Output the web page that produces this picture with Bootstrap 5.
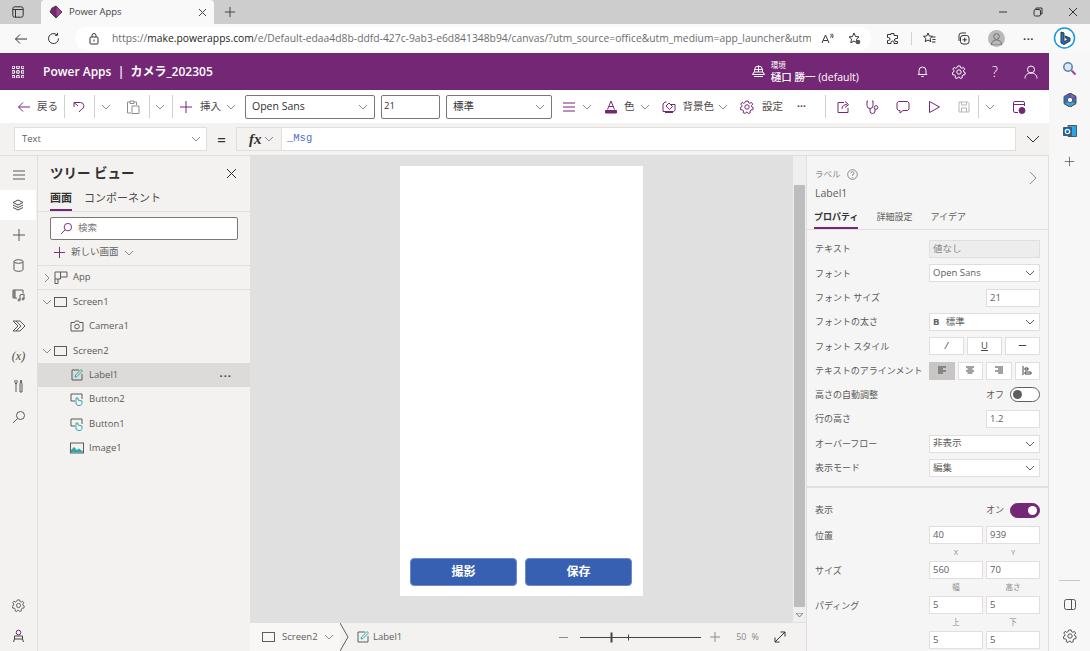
<!DOCTYPE html>
<html lang="ja">
<head>
<meta charset="UTF-8">
<title>Power Apps</title>
<link href="https://cdn.jsdelivr.net/npm/bootstrap@5.3.2/dist/css/bootstrap.min.css" rel="stylesheet">
<style>
    html, body { margin: 0; height: 651px; overflow: hidden; }
    body { width: 1090px; font-family: "Open Sans", "Noto Sans CJK JP", sans-serif; font-size: 9.5px; color: #4d4b49; background: #f7f7f7; }
    svg { display: block; flex: none; fill: none; stroke: currentColor; stroke-width: 1; }
    .ml2 { margin-left: 2px; } .ml3 { margin-left: 3px; } .ml4 { margin-left: 4px; } .ml5 { margin-left: 5px; } .ml6 { margin-left: 6px; }
    .ml7 { margin-left: 7px; } .ml8 { margin-left: 8px; } .ml9 { margin-left: 9px; } .ml10 { margin-left: 10px; } .ml12 { margin-left: 12px; }
    .ml14 { margin-left: 14px; } .ml15 { margin-left: 15px; } .ml16 { margin-left: 16px; } .ml17 { margin-left: 17px; } .ml18 { margin-left: 18px; }

    /* browser */
    .tabstrip { height: 24px; background: #cdcdcd; color: #333; }
    .brtab { width: 173px; height: 24px; margin-left: 17px; padding: 0 7px 0 8px; background: #f9f9f9; border-radius: 4px 4px 0 0; font-size: 9.5px; color: #444; }
    .addr { height: 29px; background: #f9f9f9; color: #333; }
    .pill { width: 796px; height: 23px; background: #fff; border-radius: 12px; padding: 0 9px 0 13px; }
    .url { width: 699px; font-size: 10.3px; color: #6b6b6b; white-space: nowrap; overflow: hidden; letter-spacing: .02px; }
    .url b { font-weight: 400; color: #1c1c1c; }
    .addr-sep { width: 1px; height: 13px; background: #d0d0d0; }
    .avatar { width: 17px; height: 17px; border-radius: 50%; background: #b9b9b9; color: #6f6f6f; }

    .shell { width: 1049px; height: 598px; background: #f3f2f1; }
    .edgebar { width: 41px; height: 598px; background: #f7f7f7; }
    .edge-ic { height: 31px; color: #555; }
    .edge-rule { width: 21px; height: 1px; background: #c8c8c8; margin: 0 auto 8px; }

    /* app header */
    .appbar { height: 37px; background: #742774; color: #fff; }
    .apptitle { font-size: 12px; font-weight: 600; margin-left: 19px; white-space: pre; }
    .envwrap { margin-left: 539px; width: 158px; }
    .env-s { font-size: 7.5px; line-height: 10px; }
    .env-m { font-size: 10.5px; line-height: 14px; font-weight: 500; white-space: nowrap; }
    .appbtn { width: 36.6px; }

    /* command bar */
    .cmdbar { height: 33px; background: #fff; color: #742774; }
    .cmdtxt { font-size: 10.5px; color: #4d4b49; white-space: nowrap; }
    .cmdsep { width: 1px; height: 23px; background: #d2d0ce; }
    .cmdbox { height: 24px; border: 1px solid #7a7875; border-radius: 2px; background: #fff; font-size: 10.5px; color: #323130; padding: 0 6px; }
    .w130 { width: 130px; } .w59 { width: 59px; padding: 0 2px; font-size: 9.5px; } .w106 { width: 106px; }
    .muted-ic { color: #8f8d8b; }
    .ghost-ic { color: #b9b7b5; }

    /* formula bar */
    .fxbar { height: 33px; background: #f3f2f1; border-bottom: 1px solid #e1dfdd; color: #323130; }
    .fxsel { width: 193px; height: 24px; margin-left: 14px; padding: 0 5px 0 7px; background: #fff; border: 1px solid #e1dfdd; font-size: 9.5px; color: #605e5c; }
    .fxeq { width: 29px; text-align: center; font-size: 15px; font-weight: 600; color: #323130; }
    .fxbtn { width: 45px; height: 24px; background: #f3f2f1; border: 1px solid #e1dfdd; border-right: 0; padding-left: 12px; }
    .fxbtn em { font-family: "Liberation Serif", serif; font-size: 15px; font-weight: 700; color: #323130; line-height: 1; }
    .fxinput { width: 735px; height: 24px; background: #fff; border: 1px solid #e1dfdd; padding-left: 5px; font-family: "Liberation Mono", monospace; font-size: 10.5px; color: #5a6fc6; }

    /* main */
    .mainrow { height: 495px; }
    .rail { width: 38px; border-right: 1px solid #e1dfdd; color: #5c5a58; }
    .rail-i { height: 30.2px; }
    .rail-i.on { background: #fff; color: #4d4b49; margin-right: 1px; }
    .rail-spacer { flex: 1; }

    .tree { width: 212px; background: #f3f2f1; }
    .tree-title { height: 31px; padding: 4px 13px 0 12px; font-size: 13.5px; font-weight: 600; color: #323130; }
    .tree-tabs { height: 25px; padding: 0 12px; border-bottom: 1px solid #e1dfdd; font-size: 11px; color: #4d4b49; gap: 12px; }
    .tree-tab { height: 24px; line-height: 22px; }
    .tree-tab.on, .side-tab.on { font-weight: 600; color: #323130; border-bottom: 2px solid #742774; }
    .tree-search { width: 188px; height: 23px; margin: 5px 0 0 12px; border: 1px solid #7a7875; border-radius: 2px; background: #fff; padding-left: 9px; color: #742774; }
    .tree-search span { margin-left: 5px; color: #777; font-size: 9.5px; }
    .tree-new { height: 25px; padding-left: 15px; color: #742774; }
    .tree-new span { margin: 0 5px; color: #605e5c; font-size: 9.5px; }
    .tree-row { height: 24.3px; color: #5c5a58; font-size: 9.5px; }
    .tree-row.bordered { border-top: 1px solid #e1dfdd; border-bottom: 1px solid #e1dfdd; height: 25px; }
    .tree-row.on { background: #dcdbd9; }
    .chev { width: 10px; margin-left: 4px; color: #8f8d8b; }
    .tree-row .name { margin-left: 5px; }
    .dots { margin-left: auto; margin-right: 18px; color: #444; font-size: 11px; letter-spacing: 1px; line-height: 1; font-weight: 700; }
    .ind { margin-left: 32px; }
    .teal { color: #2fa8a8; }
    .nodeic { color: #5c5a58; }

    .center { width: 556px; }
    .stagewrap { height: 466px; }
    .stage { width: 543px; background: #e0e0e0; padding-top: 10px; }
    .phone { width: 243px; height: 430px; margin-left: 150px; background: #fff; padding: 0 11px 10px 10px; gap: 8px; }
    .phonebtn { flex: 1; height: 28px; background: #3860b2; border: 1px solid #6d8bc9; border-radius: 4px; color: #fff; font-size: 12px; font-weight: 700; padding: 0; }
    .vscroll { width: 13px; background: #efefef; color: #7d7d7d; }
    .vthumb { height: 422px; margin: 0 1px; background: #bdbdbd; }
    .vtop { height: 29px; }
    .statusbar { height: 29px; background: #f3f2f1; border-top: 1px solid #e1dfdd; color: #605e5c; font-size: 9.5px; }
    .crumb1 { width: 90px; padding-left: 12px; background: #f8f7f6; gap: 6px; }
    .slider { width: 121px; height: 13px; }
    .zoomlbl { font-size: 9px; color: #888; }

    .side { width: 243px; background: #f5f5f5; border-left: 1px solid #e1dfdd; border-right: 1px solid #e1dfdd; }
    .side-head { padding: 11px 9px 0 8px; height: 50px; }
    .side-kind { font-size: 8.5px; color: #8a8886; line-height: 14px; gap: 6px; }
    .side-name { font-size: 10.5px; color: #605e5c; margin-top: 5px; line-height: 15px; }
    .side-tabs { height: 24px; padding: 0 7px; gap: 18px; font-size: 9px; border-bottom: 1px solid #e1dfdd; color: #605e5c; }
    .side-tab { height: 23px; line-height: 21px; }
    .props { padding: 7px 8px 0 8px; }
    .prop { height: 24.3px; font-size: 9px; color: #5c5a58; }
    .ctl { width: 111px; margin-left: auto; }
    .inbox { height: 18px; background: #fff; border: 1px solid #e1dfdd; color: #605e5c; padding: 0 4px 0 3px; font-size: 9.5px; white-space: nowrap; }
    .inbox.dis { background: #eeeded; color: #888; }
    .half { width: 54px; }
    .half2 { width: 54px; margin-left: 3px; }
    .seg { gap: 3px; }
    .seg .inbox { flex: 1; padding: 0; color: #444; }
    .inbox.sel { background: #c8c6c4; border-color: #c8c6c4; }
    .prop-rule { height: 2px; background: #e1dfdd; margin: 6px 0 0; }
    .tog { width: 30px; height: 15px; border: 1px solid #605e5c; border-radius: 8px; background: #fff; padding: 0 2px; margin-left: 6px; }
    .tog i { width: 9px; height: 9px; border-radius: 50%; background: #605e5c; }
    .tog.on { background: #742774; border-color: #742774; justify-content: flex-end; }
    .tog.on i { background: #fff; }
    .togwrap { margin-left: auto; width: 111px; justify-content: flex-end; font-size: 9px; }
    .prop2 { height: 18px; font-size: 9px; color: #5c5a58; }
    .cap { height: 17px; font-size: 7.5px; color: #8a8886; }
    .cap span { width: 54px; text-align: center; }
    .capgap { margin-left: 3px; }
    .props2 { padding: 10px 8px 0 8px; }
</style>
</head>
<body>

<svg width="0" height="0" class="position-absolute">
    <symbol id="i-chev" viewBox="0 0 10 10"><path d="M1 3l4 4 4-4"/></symbol>
    <symbol id="i-chevr" viewBox="0 0 10 10"><path d="M3 1l4 4-4 4"/></symbol>
    <symbol id="i-gear" viewBox="0 0 14 14"><path d="M5.8 1h2.4l.4 1.7 1.3.6 1.5-.9 1.3 1.7-1.1 1.3.2 1.6 1.5.8-.6 2.1-1.7-.1-1 1.2.3 1.7-2 .8-1-1.4H6.2l-1 1.4-2-.8.3-1.7-1-1.2-1.7.1L.2 7.8l1.5-.8.2-1.6L.8 4.100l1.3-1.700 1.500.9 1.300-.6z"/><circle cx="7" cy="7" r="2.200"/></symbol>
    <symbol id="i-plus" viewBox="0 0 14 14"><path d="M7 1v12M1 7h12"/></symbol>
    <symbol id="i-search" viewBox="0 0 14 14"><circle cx="8.500" cy="5.500" r="4"/><path d="M5.500 8.500L1 13"/></symbol>
    <symbol id="i-screen" viewBox="0 0 14 12"><rect x=".5" y="1.500" width="12" height="9"/></symbol>
    <symbol id="i-label" viewBox="0 0 14 14"><path d="M9 2H2v10h10V6"/><path d="M5 9l.6-2L11 1.500 12.500 3 7 8.500z" class="teal"/></symbol>
    <symbol id="i-button" viewBox="0 0 14 14"><path d="M5 9H1V2h11v5"/><path d="M6 6v6l2 1.500h2.500l1.500-2V9L8 8V6z" class="teal"/></symbol>
</svg>

<div class="tabstrip d-flex align-items-center">
    <svg class="ml12" width="12" height="12" viewBox="0 0 12 12" stroke-width="1.2"><rect x=".8" y=".8" width="10.400" height="10.400" rx="2"/><path d="M.8 3.500h10.400M3.500 3.500v7.700"/></svg>
    <div class="brtab d-flex align-items-center">
        <svg width="14" height="14" viewBox="0 0 14 14" stroke="none"><path d="M7 1l6 6-6 6-4-4z" fill="#b23aa5"/><path d="M3 3l4-2v12L1 7z" fill="#742774"/></svg>
        <span class="ml6 flex-fill">Power Apps</span>
        <svg width="9" height="9" viewBox="0 0 9 9" stroke-width="1.300"><path d="M1 1l7 7M8 1L1 8"/></svg>
    </div>
    <svg class="ml10" width="12" height="12" viewBox="0 0 14 14"><use href="#i-plus"/></svg>
    <div class="d-flex align-items-center ms-auto">
        <svg width="10" height="10" viewBox="0 0 10 10"><path d="M1 5h8"/></svg>
        <svg class="ml17" style="margin-left:25px" width="10" height="10" viewBox="0 0 10 10"><rect x="1" y="2.500" width="6.500" height="6.500" rx="1.500"/><path d="M3 2.500V1h6v6H7.500"/></svg>
        <svg style="margin-left:25px;margin-right:12px" width="10" height="10" viewBox="0 0 10 10"><path d="M1 1l8 8M9 1L1 9"/></svg>
    </div>
</div>

<div class="addr d-flex align-items-center">
    <svg class="ml14" width="14" height="12" viewBox="0 0 14 12" stroke-width="1.200"><path d="M13 6H1.500M6 1.500L1.500 6 6 10.500"/></svg>
    <svg class="ml18" style="margin-left:19px" width="13" height="13" viewBox="0 0 13 13" stroke-width="1.200"><path d="M11.500 6.500a5 5 0 1 1-1.500-3.500M10.500 .8V3.300H8"/></svg>
    <div class="pill d-flex align-items-center ml15">
        <svg width="12" height="12" viewBox="0 0 12 12"><rect x="2" y="4" width="8" height="7" rx="1"/><path d="M4 4V2.500a2 2 0 0 1 4 0V4M6 6.500v2"/></svg>
        <div class="url ml12">https://<b>make.powerapps.com</b>/e/Default-edaa4d8b-ddfd-427c-9ab3-e6d841348b94/canvas/?utm_source=office&amp;utm_medium=app_launcher&amp;utm_...</div>
        <svg class="ml10" width="13" height="12" viewBox="0 0 13 12"><path d="M1 10L4.500 2 8 10M2.300 7.500h4.400M9.500 1c1 .8 1 2.500 0 3.500M11 .5c1.300 1.200 1.300 3.300 0 4.500"/></svg>
        <svg class="ml14" width="13" height="13" viewBox="0 0 13 13"><path d="M6 1l1.500 3.500 3.500.4-2.600 2.400.8 3.700L6 9 2.800 10.800l.8-3.700L1 4.900l3.500-.4z"/><circle cx="10" cy="10" r="2.300" fill="#555" stroke="none"/></svg>
    </div>
    <svg class="ml15" width="13" height="13" viewBox="0 0 13 13" stroke-width="1.200"><path d="M5 1.500h3v2h3.500v3h-1.500a1.500 1.500 0 0 0 0 3h1.500v2H8v-1a1.500 1.500 0 0 0-3 0v1H1.500v-3h1a1.500 1.500 0 0 0 0-3h-1v-3H5z"/></svg>
    <div class="addr-sep ml12"></div>
    <svg class="ml10" style="margin-left:11px" width="13" height="13" viewBox="0 0 13 13"><path d="M5 1l1.300 3 3.200.3-2.400 2.200.7 3.200L5 8.100 2.200 9.700l.7-3.200L.5 4.300l3.200-.3zM9 5h3.500M9.500 7.500h3M9 10h3.500"/></svg>
    <svg style="margin-left:21px" width="13" height="13" viewBox="0 0 13 13"><rect x="3.500" y="3.500" width="8.500" height="8.500" rx="2.500"/><path d="M2 9V3.500A2.500 2.500 0 0 1 4.500 1H9M7.750 5.700v4.200M5.600 7.800h4.300"/></svg>
    <div class="avatar ml18 d-flex align-items-center justify-content-center"><svg width="13" height="13" viewBox="0 0 13 13" fill="currentColor" stroke="none"><circle cx="6.500" cy="4.500" r="2.800"/><path d="M1.500 13c0-3.500 2-5 5-5s5 1.500 5 5z"/></svg></div>
    <span style="margin-left:18px;font-weight:700;font-size:11px;line-height:1;letter-spacing:.5px">···</span>
    <svg style="margin-left:19px" width="23" height="24" viewBox="0 0 23 24" stroke="none"><circle cx="11.500" cy="11" r="10" fill="#fff" stroke="#1c9ad6" stroke-width="1.500"/><path d="M8 5l3 1v9l4-2.500-2-1-1-2.500 5 2v3l-6 3.500-3-1.500z" fill="#1776d2"/></svg>
</div>

<div class="d-flex">
    <div class="shell d-flex flex-column">
        <div class="appbar d-flex align-items-center">
            <svg class="ml12" width="12" height="12" viewBox="0 0 12 12" fill="#fff" stroke="none"><path d="M0 0h2.500v2.500H0zM4.700 0h2.500v2.500H4.700zM9.500 0H12v2.500H9.500zM0 4.700h2.500v2.500H0zM4.700 4.700h2.500v2.500H4.700zM9.500 4.700H12v2.500H9.500zM0 9.500h2.500V12H0zM4.700 9.500h2.500V12H4.700zM9.500 9.500H12V12H9.500z"/></svg>
            <div class="apptitle">Power Apps  |  カメラ_202305</div>
            <div class="envwrap d-flex align-items-center">
                <svg width="13" height="13" viewBox="0 0 13 13"><path d="M2.500 7V5a4 4 0 0 1 8 0v2M.5 9.500h12l-1.500-2.500H2zM6.500 1v6M2.500 4.500h8M2 11.500h9"/></svg>
                <div class="ml5" style="margin-left:6px">
                    <div class="env-s">環境</div>
                    <div class="env-m">樋口 勝一 (default)</div>
                </div>
            </div>
            <div class="appbtn d-flex justify-content-center" style="margin-left:-3px"><svg width="13" height="13" viewBox="0 0 13 13"><path d="M3 9.500V5.500a3.500 3.500 0 0 1 7 0v4zM1.800 9.500h9.400M5.300 11.500h2.400"/></svg></div>
            <div class="appbtn d-flex justify-content-center"><svg width="14" height="14"><use href="#i-gear"/></svg></div>
            <div class="appbtn d-flex justify-content-center"><span style="font-size:14px;line-height:1;font-weight:300">?</span></div>
            <div class="appbtn d-flex justify-content-center"><svg width="14" height="14" viewBox="0 0 14 14"><circle cx="7" cy="4.500" r="3.500"/><path d="M1 13.500c0-3.500 2.500-5.500 6-5.500s6 2 6 5.500"/></svg></div>
        </div>

        <div class="cmdbar d-flex align-items-center">
            <svg style="margin-left:17px" width="14" height="12" viewBox="0 0 14 12"><path d="M13 6H1.500M6 1.500L1.500 6 6 10.500"/></svg>
            <span class="cmdtxt ml6">戻る</span>
            <div class="cmdsep ml6"></div>
            <svg class="ml7" width="14" height="14" viewBox="0 0 14 14" stroke-width="1.200"><path d="M2 2.500h6.500a3.500 3.500 0 0 1 1 6.800L7 12M2 2.500V7M2 2.500L6 6"/></svg>
            <div class="cmdsep ml8"></div>
            <svg class="ml6 muted-ic" width="10" height="10"><use href="#i-chev"/></svg>
            <svg class="ml15 muted-ic" width="14" height="14" viewBox="0 0 14 14"><path d="M4 2H1.500v11H5M8 2h2.500v3M4 1h4v2.500H4zM6 6h7v7.500H6z"/></svg>
            <div class="cmdsep ml9"></div>
            <svg class="ml5 muted-ic" width="10" height="10"><use href="#i-chev"/></svg>
            <div class="cmdsep ml7"></div>
            <svg class="ml6" width="14" height="14"><use href="#i-plus"/></svg>
            <span class="cmdtxt ml7">挿入</span>
            <svg class="ml5 muted-ic" width="10" height="10"><use href="#i-chev"/></svg>
            <div class="cmdbox w130 ml9 d-flex align-items-center justify-content-between"><span>Open Sans</span><svg class="muted-ic" width="10" height="10"><use href="#i-chev"/></svg></div>
            <div class="cmdbox w59 ml6 d-flex align-items-center">21</div>
            <div class="cmdbox w106 ml6 d-flex align-items-center justify-content-between"><span>標準</span><svg class="muted-ic" width="10" height="10"><use href="#i-chev"/></svg></div>
            <svg class="ml10" width="14" height="12" viewBox="0 0 14 12"><path d="M1 2h12M1 6h12M1 10h12"/></svg>
            <svg class="ml6 muted-ic" width="10" height="10"><use href="#i-chev"/></svg>
            <svg class="ml12" width="14" height="14" viewBox="0 0 14 14"><path d="M3.500 9.500L7 1l3.500 8.500M5 6.500h4"/><path d="M1.500 10.500h11V13h-11z" fill="currentColor"/></svg>
            <span class="cmdtxt ml6">色</span>
            <svg class="ml5 muted-ic" width="10" height="10"><use href="#i-chev"/></svg>
            <svg class="ml12" width="14" height="14" viewBox="0 0 14 14"><path d="M4.500 2H3L1 4v7.500h10.500a2 2 0 0 0 1.500-2V4.500H9M4 6l3-3 3.500 3.500-3 3zM3 12.500h8"/></svg>
            <span class="cmdtxt ml7">背景色</span>
            <svg class="ml4 muted-ic" width="10" height="10"><use href="#i-chev"/></svg>
            <svg class="ml12" width="14" height="14"><use href="#i-gear"/></svg>
            <span class="cmdtxt ml8">設定</span>
            <span class="cmdtxt ml14" style="font-weight:700;line-height:1;color:#742774">···</span>
            <div class="cmdsep" style="margin-left:19px"></div>
            <svg class="ml10" width="14" height="14" viewBox="0 0 14 14"><path d="M8 2.500H2v10h10V8M6 9c0-3 2-4.500 5-4.500M9 1.500l3.500 3L9 7.500"/></svg>
            <svg class="ml16" width="14" height="14" viewBox="0 0 14 14"><path d="M2 1H1v4.500a3 3 0 0 0 6 0V1H6M4 8.500V11a2.500 2.500 0 0 0 5 0V9"/><circle cx="10" cy="7.500" r="1.800"/></svg>
            <svg class="ml16" width="14" height="14" viewBox="0 0 14 14"><path d="M2.500 1.500h9l1.500 1.500v6l-1.500 1.500H7L4 13v-2.500H2.500L1 9V3z"/></svg>
            <svg class="ml17" width="14" height="14" viewBox="0 0 14 14"><path d="M2.500 1.500v11l10-5.500z"/></svg>
            <svg class="ml16 ghost-ic" width="14" height="14" viewBox="0 0 14 14"><path d="M2 2h8.500L12 3.500V12H2zM4.500 2v3h5V2M4.500 12V8h5v4"/></svg>
            <div class="cmdsep ml7"></div>
            <svg class="ml6 muted-ic" width="10" height="10"><use href="#i-chev"/></svg>
            <svg class="ml16" style="margin-left:17px" width="14" height="14" viewBox="0 0 14 14"><path d="M6 12.500H3a1.500 1.500 0 0 1-1.500-1.500V3A1.500 1.500 0 0 1 3 1.500h8A1.500 1.500 0 0 1 12.500 3v3M1.500 4.500h11"/><circle cx="10" cy="10.500" r="3" fill="currentColor"/></svg>
        </div>

        <div class="fxbar d-flex align-items-center">
            <div class="fxsel d-flex align-items-center justify-content-between"><span>Text</span><svg class="muted-ic" width="10" height="10"><use href="#i-chev"/></svg></div>
            <div class="fxeq">=</div>
            <div class="fxbtn d-flex align-items-center"><em>fx</em><svg class="ml2 muted-ic" width="10" height="10"><use href="#i-chev"/></svg></div>
            <div class="fxinput d-flex align-items-center">_Msg</div>
            <svg class="ml10" style="margin-left:10px" width="14" height="12" viewBox="0 0 14 12" stroke-width="1.200"><path d="M1 3l6 6 6-6"/></svg>
        </div>

        <div class="mainrow d-flex">
            <div class="rail d-flex flex-column pt-1">
                <div class="rail-i d-flex align-items-center justify-content-center"><svg width="14" height="10" viewBox="0 0 14 10"><path d="M1 1h12M1 5h12M1 9h12"/></svg></div>
                <div class="rail-i on d-flex align-items-center justify-content-center"><svg width="12" height="13" viewBox="0 0 12 13"><path d="M6 1l5 2.500L6 6 1 3.500zM1 6l5 2.500L11 6M1 8.500L6 11l5-2.500"/></svg></div>
                <div class="rail-i d-flex align-items-center justify-content-center"><svg width="14" height="14"><use href="#i-plus"/></svg></div>
                <div class="rail-i d-flex align-items-center justify-content-center"><svg width="11" height="13" viewBox="0 0 11 13"><ellipse cx="5.500" cy="2.500" rx="4.500" ry="1.800"/><path d="M1 2.500v8c0 1 2 1.800 4.500 1.800s4.500-.8 4.500-1.800v-8"/></svg></div>
                <div class="rail-i d-flex align-items-center justify-content-center"><svg width="14" height="13" viewBox="0 0 14 13"><path d="M5 9H1V1h10v3M3 1v8M1 3h2M1 5h2M1 7h2M8 11V6l4-1v5"/><circle cx="7" cy="11" r="1"/><circle cx="11" cy="10" r="1"/></svg></div>
                <div class="rail-i d-flex align-items-center justify-content-center"><svg width="14" height="12" viewBox="0 0 14 12"><path d="M1 1h7l5 5-5 5H1l5-5zM4 1l5 5-5 5"/></svg></div>
                <div class="rail-i d-flex align-items-center justify-content-center"><span style="font-family:'Liberation Serif',serif;font-size:12px;font-style:italic;color:#4d4b49">(x)</span></div>
                <div class="rail-i d-flex align-items-center justify-content-center"><svg width="10" height="14" viewBox="0 0 10 14"><path d="M1 1v3l1 1v8M3 1v3L2 5M7 1l-1 4v8h2V5z"/></svg></div>
                <div class="rail-i d-flex align-items-center justify-content-center"><svg width="14" height="14"><use href="#i-search"/></svg></div>
                <div class="rail-spacer"></div>
                <div class="rail-i d-flex align-items-center justify-content-center"><svg width="13" height="13"  viewBox="0 0 14 14"><use href="#i-gear"/></svg></div>
                <div class="rail-i d-flex align-items-center justify-content-center"><svg width="13" height="14" viewBox="0 0 13 14"><circle cx="6.500" cy="3.500" r="2.300" stroke="#742774"/><path d="M2.500 10V7h8v3M1.500 13l1-3h8l1 3" stroke="#444"/></svg></div>
            </div>

            <div class="tree d-flex flex-column">
                <div class="tree-title d-flex justify-content-between align-items-center">
                    <span>ツリー ビュー</span>
                    <svg width="11" height="11" viewBox="0 0 11 11"><path d="M1 1l9 9M10 1l-9 9"/></svg>
                </div>
                <div class="tree-tabs d-flex">
                    <div class="tree-tab on">画面</div>
                    <div class="tree-tab">コンポーネント</div>
                </div>
                <div class="tree-search d-flex align-items-center"><svg width="13" height="13"><use href="#i-search"/></svg><span>検索</span></div>
                <div class="tree-new d-flex align-items-center"><svg width="13" height="13"><use href="#i-plus"/></svg><span>新しい画面</span><svg class="muted-ic" width="10" height="10"><use href="#i-chev"/></svg></div>
                <div class="tree-row bordered d-flex align-items-center">
                    <svg class="chev" width="10" height="10"><use href="#i-chevr"/></svg>
                    <svg class="ml2 nodeic" width="14" height="13" viewBox="0 0 14 13"><path d="M1 1h5.500v7H1zM6.500 1H13v5H6.500zM1 8v4.500h3V8"/></svg>
                    <span class="name">App</span>
                </div>
                <div class="tree-row d-flex align-items-center">
                    <svg class="chev" width="10" height="10"><use href="#i-chev"/></svg>
                    <svg class="ml2 nodeic" width="14" height="12"><use href="#i-screen"/></svg>
                    <span class="name">Screen1</span>
                </div>
                <div class="tree-row d-flex align-items-center">
                    <svg class="ind nodeic" width="14" height="12" viewBox="0 0 14 12"><path d="M1 2.500h3.500L5.500 1h3l1 1.500H13V11H1z"/><circle cx="7" cy="6.500" r="2.300"/></svg>
                    <span class="name">Camera1</span>
                </div>
                <div class="tree-row d-flex align-items-center">
                    <svg class="chev" width="10" height="10"><use href="#i-chev"/></svg>
                    <svg class="ml2 nodeic" width="14" height="12"><use href="#i-screen"/></svg>
                    <span class="name">Screen2</span>
                </div>
                <div class="tree-row on d-flex align-items-center">
                    <svg class="ind nodeic" width="14" height="14"><use href="#i-label"/></svg>
                    <span class="name">Label1</span>
                    <span class="dots">···</span>
                </div>
                <div class="tree-row d-flex align-items-center">
                    <svg class="ind nodeic" width="14" height="14"><use href="#i-button"/></svg>
                    <span class="name">Button2</span>
                </div>
                <div class="tree-row d-flex align-items-center">
                    <svg class="ind nodeic" width="14" height="14"><use href="#i-button"/></svg>
                    <span class="name">Button1</span>
                </div>
                <div class="tree-row d-flex align-items-center">
                    <svg class="ind nodeic" width="14" height="12" viewBox="0 0 14 12"><rect x=".5" y="1" width="13" height="10"/><path d="M1 10.500V8l3-3 3 3 2-1.500 4 3v1z" fill="#2fa8a8" stroke="none"/></svg>
                    <span class="name">Image1</span>
                </div>
            </div>

            <div class="center d-flex flex-column">
                <div class="stagewrap d-flex">
                    <div class="stage">
                        <div class="phone d-flex align-items-end">
                            <button class="btn phonebtn">撮影</button>
                            <button class="btn phonebtn">保存</button>
                        </div>
                    </div>
                    <div class="vscroll d-flex flex-column">
                        <div class="vtop"></div>
                        <div class="vthumb"></div>
                        <div class="flex-fill d-flex align-items-center justify-content-center"><svg width="7" height="4" viewBox="0 0 7 4" fill="currentColor" stroke="none"><path d="M0 0h7L3.500 4z"/></svg></div>
                    </div>
                </div>
                <div class="statusbar d-flex align-items-center">
                    <div class="crumb1 d-flex align-items-center align-self-stretch">
                        <svg width="14" height="12"><use href="#i-screen"/></svg>
                        <span>Screen2</span>
                        <svg class="muted-ic" width="10" height="10"><use href="#i-chev"/></svg>
                    </div>
                    <svg width="9" height="28" viewBox="0 0 9 28" stroke="#dcdad8"><path d="M0 0l8 14-8 14"/></svg>
                    <svg class="ml7" width="14" height="14"><use href="#i-label"/></svg>
                    <span class="ml3">Label1</span>
                    <svg class="muted-ic" style="margin-left:157px" width="9" height="9" viewBox="0 0 9 9"><path d="M0 4.500h9"/></svg>
                    <svg class="slider ml12" style="color:#444" viewBox="0 0 121 13"><path d="M0 6.500h121"/><path d="M31.500 1.500v10" stroke-width="2"/><path d="M48.500 3.500v6"/></svg>
                    <svg class="ml10 muted-ic" style="margin-left:9px" width="10" height="10" viewBox="0 0 10 10"><path d="M5 0v10M0 5h10"/></svg>
                    <span class="zoomlbl ml16" style="margin-left:16px">50</span>
                    <span class="zoomlbl ml5">%</span>
                    <svg style="margin-left:15px;color:#333" width="12" height="12" viewBox="0 0 12 12"><path d="M1 11l10-10M6.500 1H11v4.500M1 6.500V11h4.500"/></svg>
                </div>
            </div>

            <div class="side">
                <div class="side-head d-flex justify-content-between">
                    <div>
                        <div class="side-kind d-flex align-items-center">ラベル
                            <svg width="11" height="11" viewBox="0 0 11 11" stroke-width=".8"><circle cx="5.500" cy="5.500" r="4.800"/><path d="M4 4.300a1.500 1.500 0 1 1 1.500 1.500v1M5.500 8v.8"/></svg>
                        </div>
                        <div class="side-name">Label1</div>
                    </div>
                    <svg class="muted-ic" width="12" height="14" viewBox="0 0 12 14" style="margin-top:4px"><path d="M3 1l6 6-6 6"/></svg>
                </div>
                <div class="side-tabs d-flex">
                    <div class="side-tab on">プロパティ</div>
                    <div class="side-tab">詳細設定</div>
                    <div class="side-tab">アイデア</div>
                </div>
                <div class="props">
                    <div class="prop d-flex align-items-center"><span>テキスト</span><div class="ctl inbox dis d-flex align-items-center">値なし</div></div>
                    <div class="prop d-flex align-items-center"><span>フォント</span><div class="ctl inbox d-flex align-items-center justify-content-between"><span>Open Sans</span><svg width="10" height="10"><use href="#i-chev"/></svg></div></div>
                    <div class="prop d-flex align-items-center"><span>フォント サイズ</span><div class="half ms-auto inbox d-flex align-items-center">21</div></div>
                    <div class="prop d-flex align-items-center"><span>フォントの太さ</span><div class="ctl inbox d-flex align-items-center justify-content-between"><span><b class="me-1">B</b> 標準</span><svg width="10" height="10"><use href="#i-chev"/></svg></div></div>
                    <div class="prop d-flex align-items-center"><span>フォント スタイル</span><div class="ctl seg d-flex">
                        <div class="inbox d-flex align-items-center justify-content-center"><i>/</i></div>
                        <div class="inbox d-flex align-items-center justify-content-center"><u>U</u></div>
                        <div class="inbox d-flex align-items-center justify-content-center"><s>&nbsp;&nbsp;&nbsp;</s></div>
                    </div></div>
                    <div class="prop d-flex align-items-center"><span>テキストのアラインメント</span><div class="ctl seg d-flex">
                        <div class="inbox sel d-flex align-items-center justify-content-center"><svg width="10" height="9" viewBox="0 0 10 9"><path d="M1 1h8M1 3h5M1 5h8M1 7h5"/></svg></div>
                        <div class="inbox d-flex align-items-center justify-content-center"><svg width="10" height="9" viewBox="0 0 10 9"><path d="M1 1h8M2.500 3h5M1 5h8M2.500 7h5"/></svg></div>
                        <div class="inbox d-flex align-items-center justify-content-center"><svg width="10" height="9" viewBox="0 0 10 9"><path d="M1 1h8M4 3h5M1 5h8M4 7h5"/></svg></div>
                        <div class="inbox d-flex align-items-center justify-content-center"><svg width="10" height="9" viewBox="0 0 10 9"><path d="M1 0v9M3 2h3v2H3zM3 6h6v2H3z"/></svg></div>
                    </div></div>
                    <div class="prop d-flex align-items-center"><span>高さの自動調整</span><div class="togwrap d-flex align-items-center">オフ<div class="tog d-flex align-items-center"><i></i></div></div></div>
                    <div class="prop d-flex align-items-center"><span>行の高さ</span><div class="half ms-auto inbox d-flex align-items-center">1.2</div></div>
                    <div class="prop d-flex align-items-center"><span>オーバーフロー</span><div class="ctl inbox d-flex align-items-center justify-content-between"><span>非表示</span><svg width="10" height="10"><use href="#i-chev"/></svg></div></div>
                    <div class="prop d-flex align-items-center"><span>表示モード</span><div class="ctl inbox d-flex align-items-center justify-content-between"><span>編集</span><svg width="10" height="10"><use href="#i-chev"/></svg></div></div>
                </div>
                <div class="prop-rule"></div>
                <div class="props2">
                    <div class="prop d-flex align-items-center"><span>表示</span><div class="togwrap d-flex align-items-center">オン<div class="tog on d-flex align-items-center"><i></i></div></div></div>
                    <div class="prop2 d-flex align-items-center mt-1"><span>位置</span><div class="half ms-auto inbox d-flex align-items-center">40</div><div class="half2 inbox d-flex align-items-center">939</div></div>
                    <div class="cap d-flex align-items-center justify-content-end"><span>X</span><span class="capgap">Y</span></div>
                    <div class="prop2 d-flex align-items-center"><span>サイズ</span><div class="half ms-auto inbox d-flex align-items-center">560</div><div class="half2 inbox d-flex align-items-center">70</div></div>
                    <div class="cap d-flex align-items-center justify-content-end"><span>幅</span><span class="capgap">高さ</span></div>
                    <div class="prop2 d-flex align-items-center"><span>パディング</span><div class="half ms-auto inbox d-flex align-items-center">5</div><div class="half2 inbox d-flex align-items-center">5</div></div>
                    <div class="cap d-flex align-items-center justify-content-end"><span>上</span><span class="capgap">下</span></div>
                    <div class="prop2 d-flex align-items-center"><div class="half ms-auto inbox d-flex align-items-center">5</div><div class="half2 inbox d-flex align-items-center">5</div></div>
                    <div class="cap d-flex align-items-center justify-content-end"><span>左</span><span class="capgap">右</span></div>
                </div>
            </div>
        </div>
    </div>

    <div class="edgebar d-flex flex-column">
        <div class="edge-ic d-flex align-items-center justify-content-center"><svg width="15" height="15" viewBox="0 0 15 15"><circle cx="6" cy="6" r="4.200" fill="#d8e8f5" stroke="#5a7fa8" stroke-width="1.500"/><path d="M9.500 9.500l4 4" stroke="#a33ea1" stroke-width="2"/></svg></div>
        <div class="edge-ic d-flex align-items-center justify-content-center"><svg width="14" height="14" viewBox="0 0 14 14" stroke="none"><path d="M7 0l6 3.500v7L7 14 1 10.500v-7z" fill="#2c6fd1"/><path d="M7 0l6 3.500L7 7z" fill="#a34fd0"/><path d="M1 10.500L7 7l6 3.500L7 14z" fill="#39a5e8"/><circle cx="7" cy="7" r="2.700" fill="#f7f7f7"/></svg></div>
        <div class="edge-ic d-flex align-items-center justify-content-center"><svg width="14" height="14" viewBox="0 0 14 14" stroke="none"><path d="M5 1.500h8.500v11H5z" fill="#28a8ea"/><path d="M.5 3.500h8v8h-8z" fill="#0f6cbd"/><circle cx="4.500" cy="7.500" r="2.200" fill="none" stroke="#fff" stroke-width="1.200"/></svg></div>
        <div class="edge-ic d-flex align-items-center justify-content-center"><svg width="11" height="11" viewBox="0 0 14 14"><use href="#i-plus"/></svg></div>
        <div class="flex-fill"></div>
        <div class="edge-rule"></div>
        <div class="edge-ic d-flex align-items-center justify-content-center"><svg width="12" height="11" viewBox="0 0 12 11"><rect x=".5" y=".5" width="11" height="10" rx="2"/><path d="M7.500 .5v10"/></svg></div>
        <div class="edge-ic d-flex align-items-center justify-content-center"><svg width="14" height="14"><use href="#i-gear"/></svg></div>
    </div>
</div>

<script src="https://cdn.jsdelivr.net/npm/bootstrap@5.3.2/dist/js/bootstrap.bundle.min.js"></script>
</body>
</html>
